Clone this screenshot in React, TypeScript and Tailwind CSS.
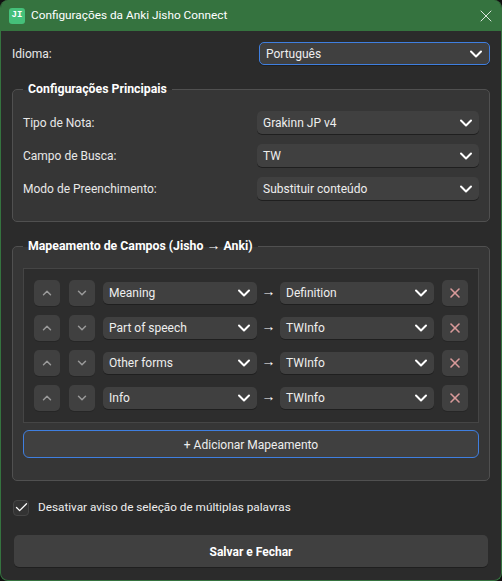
import React from 'react';
import { ChevronDown, ChevronUp, Check, X } from 'lucide-react';

const font = "font-['Roboto','Noto_Sans',sans-serif]";

const Select: React.FC<{ label: string; className?: string }> = ({ label, className = '' }) => (
  <div className={`flex items-center justify-between rounded-[5px] bg-[#404040] pl-[6px] pr-[3px] text-[12px] text-[#eeeeee] shadow-[0_1px_0_#1f1f1f] ${className}`}>
    <span>{label}</span>
    <ChevronDown size={20} strokeWidth={2.4} className="text-white" />
  </div>
);

const IconButton: React.FC<{ children: React.ReactNode }> = ({ children }) => (
  <div className="flex h-[26px] w-[26px] items-center justify-center rounded-[5px] bg-[#404040] shadow-[0_1px_0_#262626]">
    {children}
  </div>
);

const FormRow: React.FC<{ label: string; value: string }> = ({ label, value }) => (
  <div className="flex h-[23px] items-center justify-between">
    <span className="text-[12px] text-[#e8e8e8]">{label}</span>
    <Select label={value} className="h-[23px] w-[222px]" />
  </div>
);

const MappingRow: React.FC<{ from: string; to: string }> = ({ from, to }) => (
  <div className="flex h-[26px] items-center">
    <IconButton><ChevronUp size={14} strokeWidth={2.5} className="text-[#9a9a9a]" /></IconButton>
    <div className="ml-[9px]">
      <IconButton><ChevronDown size={14} strokeWidth={2.5} className="text-[#9a9a9a]" /></IconButton>
    </div>
    <Select label={from} className="ml-[8px] h-[22px] w-[154px]" />
    <span className="mb-[3px] w-[23px] text-center font-['Liberation_Sans',sans-serif] text-[14px] leading-[15px] text-white">→</span>
    <Select label={to} className="h-[22px] w-[154px]" />
    <div className="ml-[8px]">
      <IconButton><X size={16} strokeWidth={2.4} className="text-[#d99a9a]" /></IconButton>
    </div>
  </div>
);

const mappings = [
  { from: 'Meaning', to: 'Definition' },
  { from: 'Part of speech', to: 'TWInfo' },
  { from: 'Other forms', to: 'TWInfo' },
  { from: 'Info', to: 'TWInfo' },
];

export default function App() {
  return (
    <div className={`${font} h-[581px] w-[502px] overflow-hidden bg-[#111111]`}>
      <div className="flex h-full flex-col overflow-hidden rounded-[8px] border border-t-0 border-[#35733f] bg-[#2b2b2b]">
        {/* Title bar */}
        <div className="flex h-[31px] shrink-0 items-center bg-[#35733f] pl-[8px] pr-[5px]">
          <div className="flex h-[16px] w-[16px] items-center justify-center rounded-[3px] bg-[#45c07a] font-['Liberation_Mono',monospace] text-[9px] font-bold text-white">
            JI
          </div>
          <span className="ml-[6px] text-[11.8px] text-white">Configurações da Anki Jisho Connect</span>
          <X size={20} strokeWidth={1} className="ml-auto text-white" />
        </div>

        <div className="flex flex-1 flex-col px-[11px]">
          {/* Language */}
          <div className="mt-[11px] flex h-[23px] items-center justify-between">
            <span className="text-[12px] text-[#e8e8e8]">Idioma:</span>
            <Select label="Português" className="h-[23px] w-[231px] border border-[#3f7fe0]" />
          </div>

          {/* Main settings */}
          <div className="relative mt-[24px] h-[133px] rounded-[5px] border border-[#505050] bg-[#363636] px-[10px] pt-[21px]">
            <span className="absolute left-[10px] top-[-9px] bg-[linear-gradient(#2b2b2b_9px,#363636_9px)] px-[5px] text-[12.3px] leading-[17px] font-bold text-white">
              Configurações Principais
            </span>
            <div className="flex flex-col gap-[10px]">
              <FormRow label="Tipo de Nota:" value="Grakinn JP v4" />
              <FormRow label="Campo de Busca:" value="TW" />
              <FormRow label="Modo de Preenchimento:" value="Substituir conteúdo" />
            </div>
          </div>

          {/* Field mapping */}
          <div className="relative mt-[24px] h-[235px] rounded-[5px] border border-[#505050] bg-[#363636] px-[10px] pt-[21px]">
            <span className="absolute left-[10px] top-[-9px] bg-[linear-gradient(#2b2b2b_9px,#363636_9px)] px-[5px] text-[12.3px] leading-[17px] font-bold text-white">
              Mapeamento de Campos (Jisho <span className="font-['Liberation_Sans',sans-serif] text-[14px] leading-[14px]">→</span> Anki)
            </span>
            <div className="flex h-[155px] flex-col gap-[9px] border border-[#454545] bg-[#2d2d2d] px-[10px] pt-[11px]">
              {mappings.map((m) => (
                <MappingRow key={m.from} from={m.from} to={m.to} />
              ))}
            </div>
            <div className="mt-[7px] flex h-[28px] items-center justify-center rounded-[6px] border border-[#3f7fe0] bg-[#404040] pt-[1px] text-[12px] text-[#eeeeee]">
              + Adicionar Mapeamento
            </div>
          </div>

          {/* Warning checkbox */}
          <div className="mt-[18px] flex h-[17px] items-center pl-[1px]">
            <div className="flex h-[16px] w-[16px] items-center justify-center rounded-[4px] border border-[#454545] bg-[#333333]">
              <Check size={15} strokeWidth={2} className="shrink-0 text-white" />
            </div>
            <span className="ml-[9px] text-[11.75px] text-[#eeeeee]">Desativar aviso de seleção de múltiplas palavras</span>
          </div>

          {/* Save */}
          <div className="mx-[2px] mt-[19px] flex h-[32px] items-center justify-center rounded-[5px] bg-[#404040] pt-[1px] text-[12px] font-bold text-white shadow-[0_1px_0_#1f1f1f]">
            Salvar e Fechar
          </div>
        </div>
      </div>
    </div>
  );
}
